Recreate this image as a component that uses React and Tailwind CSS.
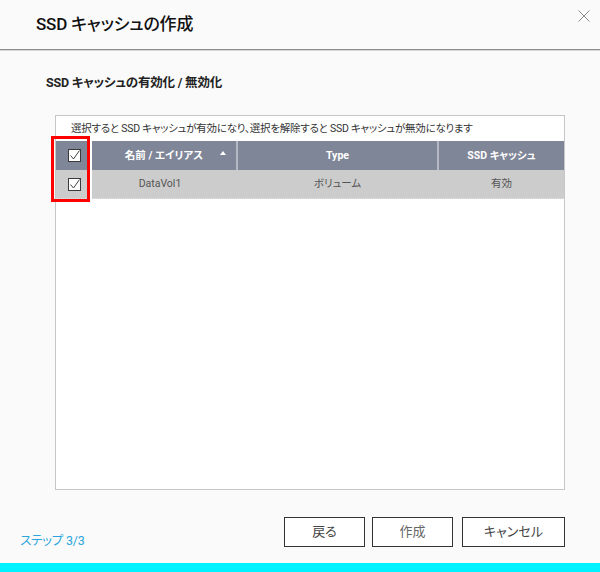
import React from 'react'

const FONT = "[font-family:Roboto,'Noto_Sans_CJK_JP',sans-serif] [font-feature-settings:'palt']"

const CheckBox = () => (
  <span className="inline-block w-[13px] h-[13px] border border-[#3a3a3a] bg-white relative">
    <svg width="13" height="13" viewBox="0 0 13 13" className="absolute left-[-1px] top-[-1px]">
      <path d="M2.5 6.5 L5.5 10 L11.5 1.5" fill="none" stroke="#444" strokeWidth="1" />
    </svg>
  </span>
)

const App = () => {
  return (
    <div className={`w-[600px] h-[572px] bg-[#fafafa] flex flex-col text-[#333] ${FONT}`}>
      {/* header */}
      <div className="h-[50px] border-b border-[#8e8e8e] flex items-center pl-[36px] relative shadow-[0_1px_0_#d6d6d6]">
        <h1 className="text-[17px] font-medium text-[#111] tracking-[-0.2px]">SSD キャッシュの作成</h1>
        <svg width="12" height="12" viewBox="0 0 12 12" className="absolute right-[10px] top-[10px]">
          <path d="M0.5 0.5 L11.5 11.5 M11.5 0.5 L0.5 11.5" stroke="#8a8a8a" strokeWidth="1" />
        </svg>
      </div>

      {/* section title */}
      <div className="pt-[25px] pl-[46px]">
        <h2 className="text-[12.5px] leading-[16px] font-bold text-[#222] tracking-[-0.2px]">SSD キャッシュの有効化 / 無効化</h2>
      </div>

      {/* table */}
      <div className="mt-[24px] ml-[55px] w-[510px] h-[375px] border border-[#c6c6c6] bg-white relative">
        <div className="h-[25px] flex items-center pl-[15px] text-[10.5px] tracking-[-0.25px] text-[#333] whitespace-nowrap">
          選択すると SSD キャッシュが有効になり、選択を解除すると SSD キャッシュが無効になります
        </div>

        <div className="flex h-[29px] bg-[#7f8698] text-white text-[10.5px] font-bold">
          <div className="w-[36px] flex items-center justify-center"><CheckBox /></div>
          <div className="w-[144px] flex items-center justify-center relative">
            名前 / エイリアス
            <svg width="6" height="4" viewBox="0 0 6 4" className="absolute left-[128px] top-[10px]">
              <path d="M0 4 L3 0 L6 4 Z" fill="#fff" />
            </svg>
          </div>
          <div className="w-[2px] bg-[#b5b9c3]" />
          <div className="w-[199px] flex items-center justify-center">Type</div>
          <div className="w-[2px] bg-[#b5b9c3]" />
          <div className="flex-1 flex items-center justify-center">SSD キャッシュ</div>
        </div>

        <div className="flex h-[29px] bg-[#cccccc] text-[#555] text-[10.5px] border-b border-dotted border-[#e2e2e2]">
          <div className="w-[36px] flex items-center justify-center"><CheckBox /></div>
          <div className="w-[144px] flex items-center justify-center pr-[8px]">DataVol1</div>
          <div className="w-[2px]" />
          <div className="w-[199px] flex items-center justify-center">ボリューム</div>
          <div className="w-[2px]" />
          <div className="flex-1 flex items-center justify-center">有効</div>
        </div>

        {/* highlight */}
        <div className="absolute left-[-5px] top-[20px] w-[39px] h-[66px] border-[3px] border-[#ff0000] shadow-[2px_0_0_#ffffff]" />
      </div>

      {/* footer */}
      <div className="flex-1 flex items-start justify-between pl-[20px] pr-[35px] pt-[27px]">
        <span className="mt-[15px] text-[12.5px] tracking-[-0.2px] text-[#2aa6dc]">ステップ 3/3</span>
        <div className="flex">
          <button className="w-[81px] h-[30px] border border-[#333] bg-white text-[13px] text-[#444]">戻る</button>
          <button className="ml-[7px] w-[81px] h-[30px] border border-[#333] bg-white text-[13px] text-[#666]">作成</button>
          <button className="ml-[9px] w-[103px] h-[30px] border border-[#333] bg-white text-[13px] text-[#444]">キャンセル</button>
        </div>
      </div>

      <div className="h-[9px] bg-[#00f2ff]" />
    </div>
  )
}

export default App
